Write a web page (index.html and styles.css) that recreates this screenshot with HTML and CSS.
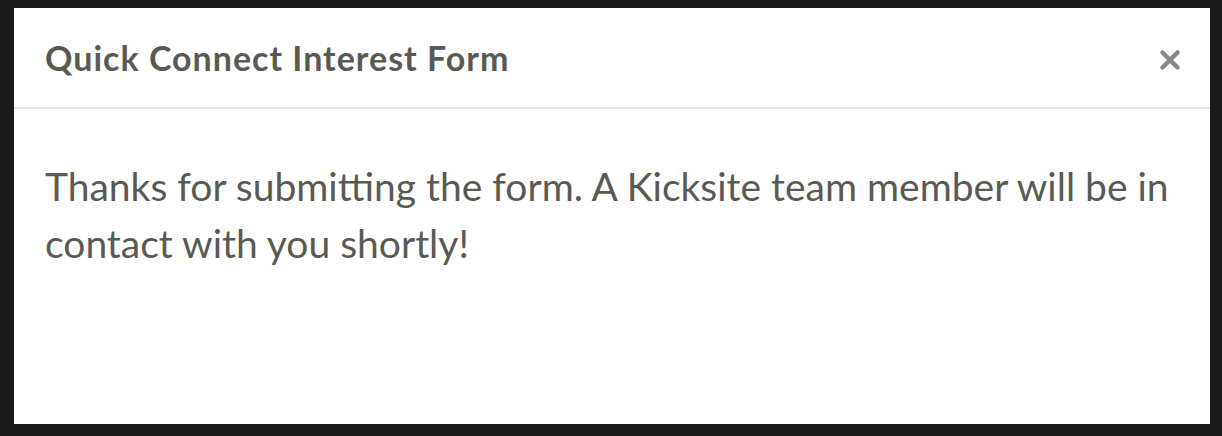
FILE: index.html
```html
<html>
  <head>
    <title>Quick Connect Interest Form</title>
    <link rel="stylesheet" href="styles.css">
  </head>
  <body>
    <div class="modal">
      <header class="modal-header">
        <h4 class="modal-title">Quick Connect Interest Form</h4>
        <button class="close" type="button">
          <svg width="22" height="22" viewBox="0 0 22 22">
            <path d="M3.5 3.5 L18.5 18.5 M18.5 3.5 L3.5 18.5" stroke="#888" stroke-width="4.5" stroke-linecap="round" />
          </svg>
        </button>
      </header>
      <div class="modal-body">
        <p>Thanks for submitting the form. A Kicksite team member will be in contact with you shortly!</p>
      </div>
    </div>
  </body>
</html>
```

FILE: styles.css
```css
body {
    margin: 0;
    background: #1a1a1a;
    font-family: "Lato", sans-serif;
    color: #5a5a54;
}

.modal {
    margin: 8px 12px 0 14px;
    height: 416px;
    background: #fff;
}

.modal-header {
    height: 99px;
    display: flex;
    align-items: center;
    justify-content: space-between;
    padding: 0 29px 0 31px;
    border-bottom: 2px solid #e7e7e7;
}

.modal-title {
    margin: 0;
    font-size: 34px;
    font-weight: bold;
    letter-spacing: 1px;
}

.close {
    border: 0;
    background: none;
    padding: 4px 0 0;
    display: flex;
}

.modal-body {
    padding: 49px 31px;
}

.modal-body p {
    margin: 0;
    font-size: 39px;
    line-height: 57px;
}
```
